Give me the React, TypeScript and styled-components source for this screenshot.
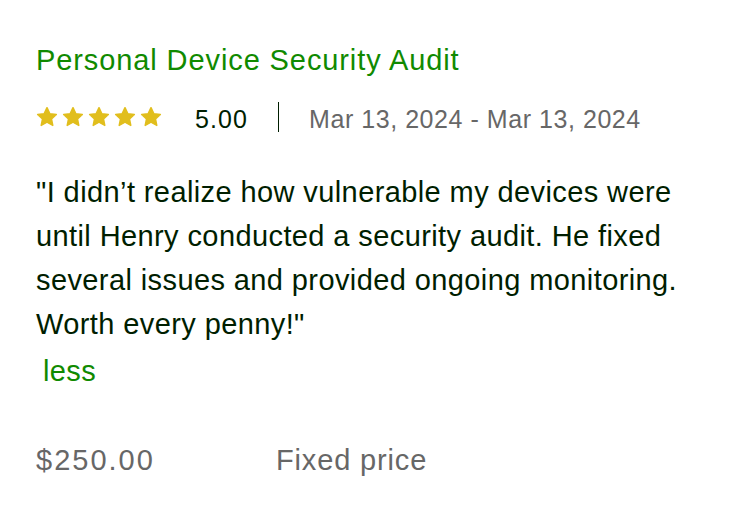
import React from "react";
import styled, { createGlobalStyle } from "styled-components";

const Global = createGlobalStyle`
  html, body { margin: 0; padding: 0; background: #ffffff; }
  body { font-family: "Liberation Sans", Arial, sans-serif; }
`;

const Card = styled.div`
  padding: 42px 36px 0 36px;
  display: flex;
  flex-direction: column;
`;

const Title = styled.h2`
  margin: 0;
  font-size: 29px;
  font-weight: 400;
  letter-spacing: 0.9px;
  color: #108a00;
  line-height: 36px;
`;

const Meta = styled.div`
  display: flex;
  align-items: center;
  margin-top: 24px;
  height: 30px;
`;

const Stars = styled.div`
  display: flex;
  gap: 4px;
`;

const MetaText = styled.span<{ $tone: "dark" | "muted" }>`
  padding-top: 5px;
  font-size: 25px;
  letter-spacing: ${(p) => (p.$tone === "dark" ? "1.1px" : "0.55px")};
  color: ${(p) => (p.$tone === "dark" ? "#001e00" : "#676767")};
`;

const Score = styled(MetaText)`
  margin-left: 33px;
`;

const Divider = styled.span`
  width: 1px;
  height: 30px;
  background: #001e00;
  margin: 0 30px 0 30px;
`;

const Review = styled.p`
  margin: 38px 0 0 0;
  font-size: 29px;
  letter-spacing: 0.4px;
  line-height: 44px;
  color: #001e00;
  max-width: 660px;
`;

const Less = styled.button`
  align-self: flex-start;
  background: none;
  border: none;
  padding: 0 0 0 7px;
  margin: 3px 0 0 0;
  font-family: inherit;
  font-size: 29px;
  letter-spacing: 0.4px;
  line-height: 44px;
  color: #108a00;
  cursor: pointer;
`;

const PriceRow = styled.div`
  display: flex;
  margin-top: 51px;
  font-size: 29px;
  color: #676767;
`;

const Price = styled.span`
  width: 240px;
  letter-spacing: 2px;
`;

const PriceType = styled.span`
  letter-spacing: 0.85px;
`;

const Star = () => (
  <svg width="22" height="22" viewBox="0 0 24 24">
    <path
      d="M12 1.8l3.05 6.55 7.15.85-5.3 4.9 1.42 7.07L12 17.6l-6.32 3.57 1.42-7.07-5.3-4.9 7.15-.85z"
      fill="#e1be1d"
      stroke="#e1be1d"
      strokeWidth="1.6"
      strokeLinejoin="round"
    />
  </svg>
);

export default function App() {
  return (
    <>
      <Global />
      <Card>
        <Title>Personal Device Security Audit</Title>
        <Meta>
          <Stars>
            {[0, 1, 2, 3, 4].map((i) => (
              <Star key={i} />
            ))}
          </Stars>
          <Score $tone="dark">5.00</Score>
          <Divider />
          <MetaText $tone="muted">Mar 13, 2024 - Mar 13, 2024</MetaText>
        </Meta>
        <Review>
          "I didn’t realize how vulnerable my devices were until Henry conducted a
          security audit. He fixed several issues and provided ongoing monitoring.
          Worth every penny!"
        </Review>
        <Less>less</Less>
        <PriceRow>
          <Price>$250.00</Price>
          <PriceType>Fixed price</PriceType>
        </PriceRow>
      </Card>
    </>
  );
}
